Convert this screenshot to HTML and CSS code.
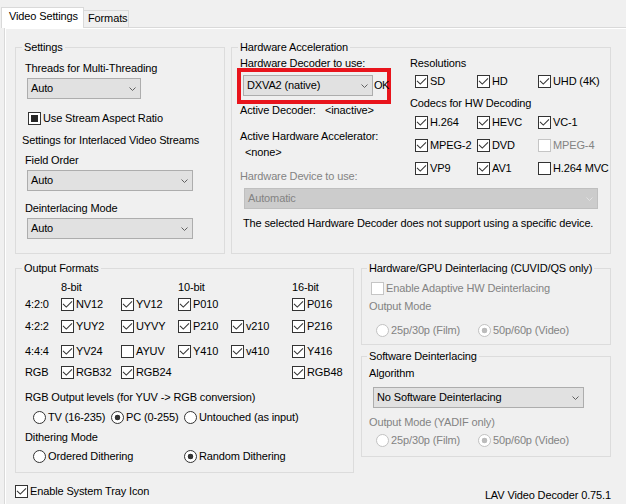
FILE: index.html
```html
<!DOCTYPE html>
<html lang="en">
<head>
<meta charset="utf-8">
<title>LAV Video Decoder - Video Settings</title>
<link rel="stylesheet" href="styles.css">
</head>
<body>
<svg class="defs" aria-hidden="true">
  <defs>
    <symbol id="tick" viewBox="0 0 11 11"><path d="M1 4.8 L4.3 8.1 L10 2.4" fill="none" stroke="#333" stroke-width="1.05"/></symbol>
    <symbol id="chev" viewBox="0 0 7 4"><path d="M0.5 0.5 L3.5 3.5 L6.5 0.5" fill="none" stroke="currentColor" stroke-width="1"/></symbol>
  </defs>
</svg>
<div class="tabs">
  <div class="tab active">Video Settings</div>
  <div class="tab">Formats</div>
</div>
<div class="panel">
  <div class="row-top">
    <fieldset class="group g-settings">
      <legend>Settings</legend>
      <div class="lbl s-threads">Threads for Multi-Threading</div>
      <div class="combo s-c1"><span>Auto</span><svg class="chev"><use href="#chev"/></svg></div>
      <label class="chk s-aspect"><span class="cb ind"></span>Use Stream Aspect Ratio</label>
      <div class="lbl s-inter">Settings for Interlaced Video Streams</div>
      <div class="lbl s-field">Field Order</div>
      <div class="combo s-c2"><span>Auto</span><svg class="chev"><use href="#chev"/></svg></div>
      <div class="lbl s-deint">Deinterlacing Mode</div>
      <div class="combo s-c3"><span>Auto</span><svg class="chev"><use href="#chev"/></svg></div>
    </fieldset>
    <fieldset class="group g-hw">
      <legend>Hardware Acceleration</legend>
      <div class="hw-grid">
        <div class="hw-left">
          <div class="lbl hl-1">Hardware Decoder to use:</div>
          <div class="dec-row">
            <div class="combo c-dec"><span>DXVA2 (native)</span><svg class="chev"><use href="#chev"/></svg></div>
            <span class="ok">OK</span>
            <div class="highlight"></div>
          </div>
          <div class="lbl hl-active"><span class="lbl-w">Active Decoder:</span>&lt;inactive&gt;</div>
          <div class="lbl hl-acc">Active Hardware Accelerator:</div>
          <div class="lbl hl-none">&lt;none&gt;</div>
          <div class="lbl dis hl-dev">Hardware Device to use:</div>
        </div>
        <div class="hw-right">
          <div class="lbl hr-res">Resolutions</div>
          <div class="cb-grid hr-resrow">
            <label class="chk"><span class="cb"><svg viewBox="0 0 11 11"><use href="#tick"/></svg></span>SD</label>
            <label class="chk"><span class="cb"><svg viewBox="0 0 11 11"><use href="#tick"/></svg></span>HD</label>
            <label class="chk"><span class="cb"><svg viewBox="0 0 11 11"><use href="#tick"/></svg></span>UHD (4K)</label>
          </div>
          <div class="lbl hr-codecs">Codecs for HW Decoding</div>
          <div class="cb-grid hr-codecrows">
            <label class="chk"><span class="cb"><svg viewBox="0 0 11 11"><use href="#tick"/></svg></span>H.264</label>
            <label class="chk"><span class="cb"><svg viewBox="0 0 11 11"><use href="#tick"/></svg></span>HEVC</label>
            <label class="chk"><span class="cb"><svg viewBox="0 0 11 11"><use href="#tick"/></svg></span>VC-1</label>
            <label class="chk"><span class="cb"><svg viewBox="0 0 11 11"><use href="#tick"/></svg></span>MPEG-2</label>
            <label class="chk"><span class="cb"><svg viewBox="0 0 11 11"><use href="#tick"/></svg></span>DVD</label>
            <label class="chk dis"><span class="cb"></span>MPEG-4</label>
            <label class="chk"><span class="cb"><svg viewBox="0 0 11 11"><use href="#tick"/></svg></span>VP9</label>
            <label class="chk"><span class="cb"><svg viewBox="0 0 11 11"><use href="#tick"/></svg></span>AV1</label>
            <label class="chk"><span class="cb"></span>H.264 MVC</label>
          </div>
        </div>
      </div>
      <div class="combo disabled c-dev"><span>Automatic</span><svg class="chev"><use href="#chev"/></svg></div>
      <div class="lbl hw-note">The selected Hardware Decoder does not support using a specific device.</div>
    </fieldset>
  </div>

  <div class="row-bottom">
    <fieldset class="group g-out">
      <legend>Output Formats</legend>
      <div class="fmt-grid">
        <span></span><span class="hdr">8-bit</span><span></span><span class="hdr">10-bit</span><span></span><span class="hdr">16-bit</span>

        <span>4:2:0</span>
        <label class="chk"><span class="cb"><svg viewBox="0 0 11 11"><use href="#tick"/></svg></span>NV12</label>
        <label class="chk"><span class="cb"><svg viewBox="0 0 11 11"><use href="#tick"/></svg></span>YV12</label>
        <label class="chk"><span class="cb"><svg viewBox="0 0 11 11"><use href="#tick"/></svg></span>P010</label>
        <span></span>
        <label class="chk"><span class="cb"><svg viewBox="0 0 11 11"><use href="#tick"/></svg></span>P016</label>

        <span>4:2:2</span>
        <label class="chk"><span class="cb"><svg viewBox="0 0 11 11"><use href="#tick"/></svg></span>YUY2</label>
        <label class="chk"><span class="cb"><svg viewBox="0 0 11 11"><use href="#tick"/></svg></span>UYVY</label>
        <label class="chk"><span class="cb"><svg viewBox="0 0 11 11"><use href="#tick"/></svg></span>P210</label>
        <label class="chk"><span class="cb"><svg viewBox="0 0 11 11"><use href="#tick"/></svg></span>v210</label>
        <label class="chk"><span class="cb"><svg viewBox="0 0 11 11"><use href="#tick"/></svg></span>P216</label>

        <span>4:4:4</span>
        <label class="chk"><span class="cb"><svg viewBox="0 0 11 11"><use href="#tick"/></svg></span>YV24</label>
        <label class="chk"><span class="cb"></span>AYUV</label>
        <label class="chk"><span class="cb"><svg viewBox="0 0 11 11"><use href="#tick"/></svg></span>Y410</label>
        <label class="chk"><span class="cb"><svg viewBox="0 0 11 11"><use href="#tick"/></svg></span>v410</label>
        <label class="chk"><span class="cb"><svg viewBox="0 0 11 11"><use href="#tick"/></svg></span>Y416</label>

        <span>RGB</span>
        <label class="chk"><span class="cb"><svg viewBox="0 0 11 11"><use href="#tick"/></svg></span>RGB32</label>
        <label class="chk"><span class="cb"><svg viewBox="0 0 11 11"><use href="#tick"/></svg></span>RGB24</label>
        <span></span>
        <span></span>
        <label class="chk"><span class="cb"><svg viewBox="0 0 11 11"><use href="#tick"/></svg></span>RGB48</label>
      </div>
      <div class="lbl of-rgb">RGB Output levels (for YUV -&gt; RGB conversion)</div>
      <div class="radios of-r1">
        <label class="rad w78"><span class="rb"></span>TV (16-235)</label>
        <label class="rad w73"><span class="rb on"></span>PC (0-255)</label>
        <label class="rad"><span class="rb"></span>Untouched (as input)</label>
      </div>
      <div class="lbl of-dith">Dithering Mode</div>
      <div class="radios of-r2">
        <label class="rad w151"><span class="rb"></span>Ordered Dithering</label>
        <label class="rad"><span class="rb on"></span>Random Dithering</label>
      </div>
    </fieldset>

    <div class="col-right">
      <fieldset class="group g-hwd">
        <legend>Hardware/GPU Deinterlacing (CUVID/QS only)</legend>
        <label class="chk dis hwd-chk"><span class="cb"></span>Enable Adaptive HW Deinterlacing</label>
        <div class="lbl dis hwd-om">Output Mode</div>
        <div class="radios hwd-r">
          <label class="rad dis w102"><span class="rb"></span>25p/30p (Film)</label>
          <label class="rad dis"><span class="rb on"></span>50p/60p (Video)</label>
        </div>
      </fieldset>
      <fieldset class="group g-swd">
        <legend>Software Deinterlacing</legend>
        <div class="lbl sw-alg">Algorithm</div>
        <div class="combo c-sw"><span>No Software Deinterlacing</span><svg class="chev"><use href="#chev"/></svg></div>
        <div class="lbl dis sw-om">Output Mode (YADIF only)</div>
        <div class="radios sw-r">
          <label class="rad dis w102"><span class="rb"></span>25p/30p (Film)</label>
          <label class="rad dis"><span class="rb on"></span>50p/60p (Video)</label>
        </div>
      </fieldset>
    </div>
  </div>

  <div class="footer">
    <label class="chk"><span class="cb"><svg viewBox="0 0 11 11"><use href="#tick"/></svg></span>Enable System Tray Icon</label>
    <div class="version">LAV Video Decoder 0.75.1</div>
  </div>
</div>
</body>
</html>
```

FILE: styles.css
```css
* { box-sizing: border-box; }
html, body { margin: 0; padding: 0; }
body {
  width: 626px;
  height: 504px;
  overflow: hidden;
  background: #f0f0f0;
  font-family: "Liberation Sans", Arial, sans-serif;
  font-size: 11px;
  line-height: 13px;
  letter-spacing: -0.13px;
  color: #000;
}
.defs { display: block; width: 0; height: 0; overflow: hidden; }

/* Tabs */
.tabs { display: flex; align-items: flex-end; height: 27px; padding-left: 1px; }
.tab {
  height: 17px;
  width: 46px;
  margin-left: -1px;
  padding: 1px 0 0 4px;
  border: 1px solid #d9d9d9;
  border-bottom: none;
  background: #f0f0f0;
  white-space: nowrap;
}
.tab.active {
  position: relative;
  z-index: 1;
  width: 83px;
  height: 21px;
  margin: 0 0 -1px 0;
  padding: 2px 0 0 7px;
  background: #fff;
}

/* Panel (extends past the right and bottom edges of the window) */
.panel {
  margin-left: 4px;
  width: 622px;
  height: 477px;
  overflow: hidden;
  border-top: 1px solid #d9d9d9;
  border-left: 1px solid #d9d9d9;
  box-shadow: inset 1px 1px 0 #fff;
  padding: 13px 0 0 10px;
}

/* Group boxes */
.group { margin: 0; padding: 0; border: 1px solid #dcdcdc; min-width: 0; }
.group > legend { padding: 0 2px; margin-left: 5px; line-height: 13px; }

.lbl { line-height: 13px; height: 13px; white-space: nowrap; }
.dis { color: #838383; }

/* Combo boxes */
.combo {
  display: flex;
  align-items: center;
  height: 21px;
  border: 1px solid #adadad;
  background: #e1e1e1;
  padding: 0 4px 0 3px;
  white-space: nowrap;
}
.chev { width: 7px; height: 4px; margin-left: auto; flex: none; color: #606060; }
.combo.disabled { background: #cccccc; border-color: #bfbfbf; color: #838383; }
.combo.disabled .chev { color: #e2e2e2; }

/* Checkboxes */
.chk { display: flex; align-items: center; gap: 2px; height: 13px; white-space: nowrap; }
.cb {
  flex: none;
  width: 13px;
  height: 13px;
  border: 1px solid #333;
  background: #fff;
  display: flex;
  align-items: center;
  justify-content: center;
}
.cb svg { display: block; width: 11px; height: 11px; }
.cb.ind::after { content: ""; width: 7px; height: 7px; background: #262626; }
.chk.dis .cb { border-color: #c5c5c5; }

/* Radios */
.radios { display: flex; height: 13px; }
.rad { display: flex; align-items: center; gap: 2px; height: 13px; white-space: nowrap; }
.rb {
  flex: none;
  width: 13px;
  height: 13px;
  border: 1px solid #333;
  border-radius: 50%;
  background: #fff;
}
.rb.on { background: radial-gradient(circle, #333 0 2.6px, #fff 3.1px); }
.rad.dis .rb { border-color: #c2c2c2; }
.rad.dis .rb.on { background: radial-gradient(circle, #bcbcbc 0 2.6px, #fff 3.1px); }
.w78 { width: 78px; }
.w73 { width: 73px; }
.w102 { width: 102px; }
.w151 { width: 151px; }

/* Top row */
.row-top { display: flex; gap: 6px; }
.g-settings { width: 210px; padding: 0 0 14px 9px; }
.g-settings > legend { margin-left: -3px; }
.s-threads { margin-top: 8px; }
.s-c1 { margin: 3px 0 0 2px; width: 114px; }
.s-aspect { margin: 13px 0 0 3px; }
.s-inter { margin: 9px 0 0 -3px; }
.s-field { margin-top: 7px; }
.s-c2, .s-c3 { margin: 3px 0 0 2px; width: 166px; }
.s-deint { margin-top: 11px; }

.g-hw { width: 380px; padding: 0 0 23px 8px; }
.g-hw > legend { margin-left: -2px; }
.hw-grid { display: grid; grid-template-columns: 170px 1fr; align-items: start; }
.hl-1 { margin-top: 3px; }
.dec-row { position: relative; display: flex; align-items: center; height: 21px; margin-top: 5px; }
.c-dec { margin-left: 3px; width: 130px; }
.ok { position: relative; z-index: 1; margin-left: 1px; letter-spacing: -0.6px; }
.highlight {
  position: absolute;
  left: -3px;
  top: -7px;
  width: 154px;
  height: 36px;
  border: 4px solid #e8141c;
  pointer-events: none;
}
.hl-active { margin-top: 8px; }
.lbl-w { display: inline-block; width: 85px; }
.hl-acc { margin-top: 13px; }
.hl-none { margin: 3px 0 0 5px; }
.hl-dev { margin-top: 11px; }

.hr-res { margin-top: 3px; }
.cb-grid { display: grid; grid-template-columns: 62px 61px auto; padding-left: 5px; align-items: start; }
.hr-resrow { margin-top: 5px; }
.hr-codecs { margin-top: 9px; }
.hr-codecrows { margin-top: 6px; grid-template-rows: 23px 23px 13px; }

.c-dev { margin: 5px 0 0 4px; width: 354px; }
.hw-note { margin: 8px 0 0 3px; }

/* Bottom row */
.row-bottom { display: flex; gap: 7px; margin-top: 8px; align-items: flex-start; }
.g-out { width: 339px; padding: 0 0 9px 9px; }
.g-out > legend { margin-left: -3px; }
.fmt-grid {
  display: grid;
  margin-top: 6px;
  grid-template-columns: 36px 60px 57px 53px 61px 1fr;
  grid-template-rows: 17px 22px 25px 21px 13px;
  align-items: start;
  line-height: 13px;
}
.fmt-grid > span { height: 13px; }
.of-rgb { margin-top: 12px; }
.of-r1 { margin: 7px 0 0 8px; }
.of-dith { margin-top: 7px; }
.of-r2 { margin: 6px 0 0 8px; }

.col-right { width: 250px; display: flex; flex-direction: column; }
.g-hwd { padding: 0 0 7px 0; }
.hwd-chk { margin: 7px 0 0 9px; }
.hwd-om { margin: 5px 0 0 7px; }
.hwd-r { margin: 11px 0 0 14px; }
.g-swd { margin-top: 5px; padding: 0 0 9px 0; }
.sw-alg { margin: 4px 0 0 7px; }
.c-sw { margin: 7px 0 0 11px; width: 211px; }
.sw-om { margin: 8px 0 0 7px; }
.sw-r { margin: 5px 0 0 14px; }

/* Footer */
.footer { display: flex; justify-content: space-between; align-items: flex-start; width: 596px; margin-top: 12px; }
.version { margin-top: 4px; white-space: nowrap; }
```
